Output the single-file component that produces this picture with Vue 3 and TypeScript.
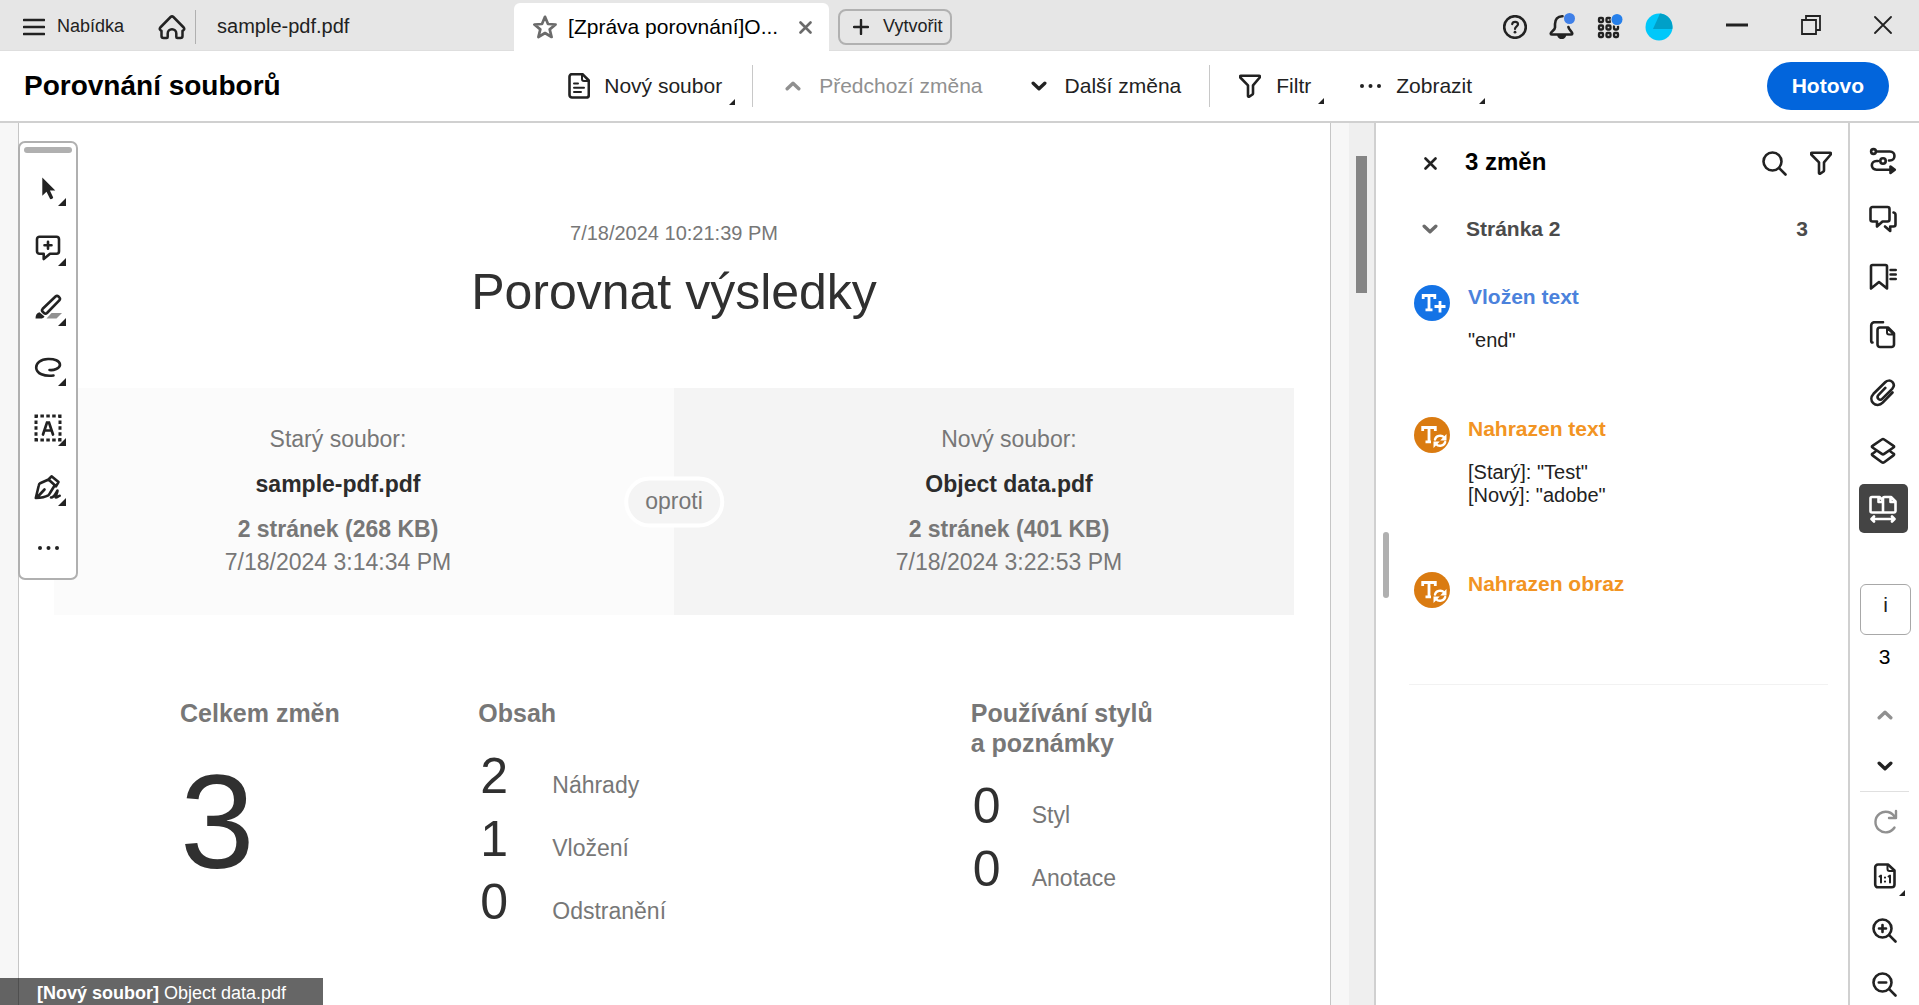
<script setup lang="ts">
import { ref } from 'vue'

interface Glyph { w: number; h: number; body: string }
interface Tool { icon: string; label: string; more?: boolean }
interface Change { kind: 'insert' | 'replace'; title: string; lines: string[] }
interface StatRow { count: number; label: string }

const dots = '<g fill="currentColor" stroke="none"><circle cx="2" cy="3" r="2"/><circle cx="10.500" cy="3" r="2"/><circle cx="19" cy="3" r="2"/></g>'

const icons: Record<string, Glyph> = {
  menu: { w: 22, h: 18, body: '<path d="M1 2h20M1 9h20M1 16h20"/>' },
  home: { w: 28, h: 26, body: '<path stroke-width="2.500" d="M2.300 13.500 12.600 3a2 2 0 0 1 2.800 0l10.300 10.500c1.200 1.500.2 3-1.200 3.200v5.300a2 2 0 0 1-2 2h-3.200a1 1 0 0 1-1-1v-3.500a4 4 0 0 0-8.600 0V23a1 1 0 0 1-1 1H5.500a2 2 0 0 1-2-2v-5.300c-1.400-.2-2.400-1.700-1.200-3.200z"/>' },
  star: { w: 24, h: 24, body: '<path stroke-width="2.700" d="m12 1.800 3 7.200 7.600.5-5.900 4.900 1.900 7.600L12 18l-6.600 4 1.900-7.600L1.400 9.500 9 9z"/>' },
  close: { w: 13, h: 13, body: '<path stroke-width="2.600" d="m1.500 1.500 10 10m0-10-10 10"/>' },
  plus: { w: 16, h: 16, body: '<path stroke-width="2.400" d="M8 1v14M1 8h14"/>' },
  help: { w: 24, h: 24, body: '<circle cx="12" cy="12" r="10.800"/><path stroke-width="2.200" d="M9.200 9.200c.3-3.200 5.800-3.200 5.800 0 0 2.200-3 2-3 4.800"/><circle cx="12" cy="17.200" r="1.400" fill="currentColor" stroke="none"/>' },
  bell: { w: 26, h: 28, body: '<path d="M13.500 3.200C8.500 3 6 6.300 6 11v3.500c0 2.600-4.300 4-4.300 6 0 .7.400 1 1 1h19.600c.6 0 1-.3 1-1 0-2-3.300-3.400-3.900-6.500"/><path fill="currentColor" d="M9.500 22.500a3.400 3.400 0 0 0 6.400 0z"/><circle cx="20.500" cy="5.500" r="5.500" fill="#4080e8" stroke="none"/>' },
  apps: { w: 26, h: 26, body: '<g stroke-width="2.300"><rect x="2" y="4" width="4" height="4" rx="1"/><rect x="9.500" y="4" width="4" height="4" rx="1"/><rect x="2" y="11.500" width="4" height="4" rx="1"/><rect x="9.500" y="11.500" width="4" height="4" rx="1"/><path d="M17 12.500v2a1 1 0 0 0 1 1h2a1 1 0 0 0 1-1v-2"/><rect x="2" y="19" width="4" height="4" rx="1"/><rect x="9.500" y="19" width="4" height="4" rx="1"/><rect x="17" y="19" width="4" height="4" rx="1"/></g><circle cx="20" cy="5.500" r="6.500" fill="#e6e6e6" stroke="none"/><circle cx="20" cy="5.500" r="5.500" fill="#2680eb" stroke="none"/>' },
  avatar: { w: 28, h: 28, body: '<g stroke="none"><circle cx="14" cy="14" r="13.500" fill="#00c8fa"/><path fill="#00a0c8" d="M15 .5 8 16h19.300A13.500 13.500 0 0 0 15 .5z"/></g>' },
  minimise: { w: 22, h: 4, body: '<path stroke-width="3" stroke-linecap="butt" d="M0 2h22"/>' },
  restore: { w: 20, h: 20, body: '<path stroke-width="1.800" stroke-linejoin="miter" d="M1 5h14v14H1zM5 5V1h14v14h-4"/>' },
  closeWindow: { w: 18, h: 18, body: '<path stroke-width="1.800" d="m1 1 16 16m0-16L1 17"/>' },
  doc: { w: 22, h: 26, body: '<path d="M4 1.200h10.500l6.300 6.300V22a2.500 2.500 0 0 1-2.500 2.500H4A2.500 2.500 0 0 1 1.500 22V3.700A2.500 2.500 0 0 1 4 1.200z"/><path stroke-width="2" d="M14 1.500V6a2 2 0 0 0 2 2h4.500M6 10.500h4M6 14.700h10M6 19h7"/>' },
  up: { w: 16, h: 10, body: '<path stroke-width="3.400" d="m2.200 7.800 5.800-5.500 5.800 5.500"/>' },
  down: { w: 16, h: 10, body: '<path stroke-width="3.400" d="m2.200 2.200 5.800 5.500 5.800-5.500"/>' },
  filter: { w: 22, h: 24, body: '<path d="M1.900 1.800h18.200c.9 0 1.200 1 .6 1.700L14 11.300v8.200c0 .5-.2.800-.6 1l-3.200 2.200c-.6.300-1.200 0-1.200-.7V11.300L1.300 3.500c-.6-.7-.3-1.700.6-1.700z"/>' },
  more: { w: 21, h: 6, body: dots },
  corner: { w: 8, h: 8, body: '<path fill="currentColor" stroke="none" d="M8 0v8H0z"/>' },
  select: { w: 28, h: 28, body: '<path fill="currentColor" stroke="none" d="M8.300 3.500v18.300l4.200-4 3.500 7c.5 1 3.600-.4 3.100-1.500l-3.200-6.800h5.400z"/>' },
  comment: { w: 28, h: 28, body: '<path d="M5.500 2.800h17a2.500 2.500 0 0 1 2.500 2.500v12a2.500 2.500 0 0 1-2.500 2.500H16L9.700 25v-5.200H5.500A2.500 2.500 0 0 1 3 17.300v-12a2.500 2.500 0 0 1 2.500-2.500zM14 7.800v7M10.500 11.300h7"/>' },
  highlight: { w: 28, h: 28, body: '<path fill="#929292" stroke="none" d="M17.500 19H28l-5.500 5.500H12.500z"/><path d="M21.500 2.500a2.200 2.200 0 0 1 3 0l.8.800a2.200 2.200 0 0 1 0 3L13 19a2.200 2.200 0 0 1-3 0l-1.300-1.200a2.200 2.200 0 0 1 0-3z"/><path fill="currentColor" stroke="none" d="M5.500 18.300 10.500 22.500c-.8 1.400-2 2-4 2H1.500c0-3.200 1.300-5.700 4-6.200z"/>' },
  lasso: { w: 28, h: 28, body: '<path d="M15.500 16c4.500.5 10-1.500 10.500-5 0-4.500-6-6.200-12-6-7.500.2-12 4.200-11.800 8.800.4 5.700 7.800 9 17.300 7.700"/>' },
  textbox: { w: 28, h: 28, body: '<g stroke-width="3" stroke-linecap="butt"><path stroke-dasharray="3.500 2.400" d="M.5 2h27M.5 26h27M2 .5v27M26 .5v27"/></g><path stroke-width="2.700" stroke-linejoin="miter" d="M9 20.500 13 8.500h2l4 12M10.500 16.500h7"/>' },
  sign: { w: 28, h: 28, body: '<path d="m14.500 5.500-8.300 3.700c-1 .5-1.300 1.500-1.500 2.600L1.800 24c3.700-.2 8.800-.7 12.400-2.700 1-.6 1.300-1.200 1.800-2.300l4.600-7.500M14.500 5.500l3-3.200 7 5.800-2.500 4.200zM3 23.500l7.500-8M17 23.500c3 .3 5-4.500 6.500-7 .5 1.500-3 7-1.500 7s2-1.500 3.700-1.800"/>' },
  workflow: { w: 28, h: 28, body: '<circle cx="4.500" cy="4.500" r="2.400"/><circle cx="14" cy="14" r="2.700"/><path d="M7.500 4.500h13.300c6.200 0 6.200 9 0 9h-.8M9 14H7.500c-6.200 0-6.200 8.700 0 8.700h15"/><path fill="currentColor" d="M21.500 19.500v6.400l4.300-3.200z"/>' },
  comments: { w: 28, h: 28, body: '<path d="M3.500 2h15a2 2 0 0 1 2 2v10.500a2 2 0 0 1-2 2h-5L8 21.500v-5H3.500a2 2 0 0 1-2-2V4a2 2 0 0 1 2-2zM24.500 7.500c1.300.3 2 1 2 2.300v9.700a2 2 0 0 1-2 2h-3.300V26l-5.200-4.500"/>' },
  bookmark: { w: 28, h: 28, body: '<path d="M3.500 2h13a1.500 1.500 0 0 1 1.500 1.500v22L10 19l-8 6.500v-22A1.500 1.500 0 0 1 3.500 2z"/><path stroke-width="2.400" d="M21.500 7h5.300M21.500 11.500h5.300M21.500 16h5.300"/>' },
  pages: { w: 28, h: 28, body: '<path d="M3.500 21.500c-1 0-1.300-.8-1.300-1.800V4.500A3.300 3.300 0 0 1 5.500 1.200H14M11 6.500h8l6 6V23.500a2.500 2.500 0 0 1-2.500 2.500H11a2.500 2.500 0 0 1-2.500-2.500V9A2.500 2.500 0 0 1 11 6.500z"/><path stroke-width="2" d="M18 7v4.500a2 2 0 0 0 2 2h5z"/>' },
  attach: { w: 28, h: 28, body: '<path stroke-width="2.600" d="m23.500 13.500-9.800 10.200c-2.900 2.900-7 2.900-9.500.4-2.500-2.600-2.400-6.400.3-9.300L16.200 3.300c2-2 5.100-2.200 7.100-.4 1.900 2 1.800 4.800-.1 6.900L13.400 19.700c-1.200 1.200-2.900 1.200-4 .2-1.100-1.200-1-2.800.2-4l6.700-7"/>' },
  layers: { w: 28, h: 28, body: '<path d="M12.800 2.500a2 2 0 0 1 2.400 0l9.300 6.300c.8.500.8 1.200 0 1.700l-9.300 6.400a2 2 0 0 1-2.400 0L3.500 10.500c-.8-.5-.8-1.200 0-1.700zM6.500 14.500l-3 2.200c-.8.500-.8 1.200 0 1.700l9.300 6.800a2 2 0 0 0 2.400 0l9.300-6.800c.8-.5.8-1.200 0-1.700l-3-2.200"/>' },
  compare: { w: 28, h: 28, body: '<path d="M3 2h7.500l3.500 3.500v12H3A1.500 1.500 0 0 1 1.500 16V3.500A1.500 1.500 0 0 1 3 2zM14 17.500V3.500A1.500 1.500 0 0 1 15.500 2H22l4.500 4.500V16a1.500 1.500 0 0 1-1.500 1.500zM9.500 2.500V7h4M21.500 2.500V7H26"/><path stroke-width="2.600" d="M4 24h20M5 21.500 2.500 24 5 26.500M23 21.500l2.500 2.500-2.500 2.500"/>' },
  search: { w: 25, h: 25, body: '<circle cx="10.500" cy="10.500" r="9"/><path stroke-width="2.600" d="m17.200 17.200 6.300 6.300"/>' },
  rotate: { w: 26, h: 26, body: '<path stroke-width="2.400" d="M23 8.500A10.300 10.300 0 1 0 22.500 18.500M24 2v7h-7"/>' },
  actual: { w: 24, h: 28, body: '<path stroke-width="2.600" d="M5 2.500h10l6.500 6V22.500A2.800 2.800 0 0 1 18.700 25.300H5A2.800 2.800 0 0 1 2.200 22.500V5.300A2.800 2.800 0 0 1 5 2.500z"/><path stroke-width="2" d="M14.500 3v4a2 2 0 0 0 2 2h4.500M6.500 14.500l1.500-1v7M15.500 14.500l1.500-1v7"/><path stroke-width="2.200" d="M12 15.500v.1M12 19.500v.1"/>' },
  zoomIn: { w: 25, h: 25, body: '<circle cx="10.500" cy="10.500" r="9"/><path stroke-width="2.600" d="m17.200 17.200 6.300 6.300M10.500 7v7M7 10.500h7"/>' },
  zoomOut: { w: 25, h: 25, body: '<circle cx="10.500" cy="10.500" r="9"/><path stroke-width="2.600" d="m17.200 17.200 6.300 6.300M6.800 10.500h7.400"/>' },
  insert: { w: 36, h: 36, body: '<g stroke-linejoin="miter" stroke-linecap="butt" stroke-width="2.800"><path d="M9.200 14v-3.500h11.600V14M15 10.500v14.300M11.500 24.800h7"/><path d="M20.500 21.500h11M26 16v11.500"/></g>' },
  replace: { w: 36, h: 36, body: '<g stroke-linejoin="miter" stroke-linecap="butt" stroke-width="2.800"><path d="M8.700 14v-3.500h12.600V14M15 10.500v14.300M11.500 24.800H17"/></g><path stroke-width="2.400" d="M21 22.500c.8-4 6.500-5 9-2.200M31.200 25c-1 4-6.500 5-9 2.200"/><path fill="currentColor" stroke="none" d="M32.500 17v6.500h-6.300zM19.500 31v-6.500h6.300z"/>' },
}

const tools: Tool[] = [
  { icon: 'select', label: 'Vybrat', more: true },
  { icon: 'comment', label: 'Komentář', more: true },
  { icon: 'highlight', label: 'Zvýraznit', more: true },
  { icon: 'lasso', label: 'Kreslit', more: true },
  { icon: 'textbox', label: 'Textové pole', more: true },
  { icon: 'sign', label: 'Podpis', more: true },
  { icon: 'more', label: 'Více' },
]

const rail: Tool[] = [
  { icon: 'workflow', label: 'Postup' },
  { icon: 'comments', label: 'Komentáře' },
  { icon: 'bookmark', label: 'Záložky' },
  { icon: 'pages', label: 'Stránky' },
  { icon: 'attach', label: 'Přílohy' },
  { icon: 'layers', label: 'Vrstvy' },
  { icon: 'compare', label: 'Porovnání' },
]

const changes: Change[] = [
  { kind: 'insert', title: 'Vložen text', lines: ['"end"'] },
  { kind: 'replace', title: 'Nahrazen text', lines: ['[Starý]: "Test"', '[Nový]: "adobe"'] },
  { kind: 'replace', title: 'Nahrazen obraz', lines: [] },
]

const files = [
  { heading: 'Starý soubor:', name: 'sample-pdf.pdf', size: '2 stránek (268 KB)', date: '7/18/2024 3:14:34 PM' },
  { heading: 'Nový soubor:', name: 'Object data.pdf', size: '2 stránek (401 KB)', date: '7/18/2024 3:22:53 PM' },
]

const content: StatRow[] = [
  { count: 2, label: 'Náhrady' },
  { count: 1, label: 'Vložení' },
  { count: 0, label: 'Odstranění' },
]
const styling: StatRow[] = [
  { count: 0, label: 'Styl' },
  { count: 0, label: 'Anotace' },
]

const page = ref('i')
const activePanel = ref('compare')

const box = (name: string) => ({
  viewBox: `0 0 ${icons[name].w} ${icons[name].h}`,
  width: icons[name].w,
  height: icons[name].h,
  innerHTML: icons[name].body,
  'aria-hidden': true,
})
</script>

<template>
  <div class="app">
    <header class="tabs">
      <button class="menu" type="button"><svg class="icon" v-bind="box('menu')" />Nabídka</button>
      <button class="home" type="button" aria-label="Domů"><svg class="icon" v-bind="box('home')" /></button>
      <button class="tab" type="button">sample-pdf.pdf</button>
      <div class="tab active">
        <button class="star" type="button" aria-label="Hvězdička"><svg class="icon" v-bind="box('star')" /></button>
        <span class="tab-title">[Zpráva porovnání]O...</span>
        <button class="tab-close" type="button" aria-label="Zavřít kartu"><svg class="icon" v-bind="box('close')" /></button>
      </div>
      <button class="create" type="button"><svg class="icon" v-bind="box('plus')" />Vytvořit</button>
      <div class="account">
        <button type="button" aria-label="Nápověda"><svg class="icon" v-bind="box('help')" /></button>
        <button type="button" aria-label="Oznámení"><svg class="icon" v-bind="box('bell')" /></button>
        <button type="button" aria-label="Aplikace"><svg class="icon" v-bind="box('apps')" /></button>
        <button type="button" aria-label="Účet"><svg class="icon" v-bind="box('avatar')" /></button>
      </div>
      <div class="window">
        <button type="button" aria-label="Minimalizovat"><svg class="icon" v-bind="box('minimise')" /></button>
        <button type="button" aria-label="Obnovit"><svg class="icon" v-bind="box('restore')" /></button>
        <button type="button" aria-label="Zavřít"><svg class="icon" v-bind="box('closeWindow')" /></button>
      </div>
    </header>

    <div class="toolbar">
      <h1>Porovnání souborů</h1>
      <div class="actions">
        <button class="action new-file" type="button">
          <svg class="icon" v-bind="box('doc')" />Nový soubor<svg class="icon corner" v-bind="box('corner')" />
        </button>
        <span class="rule"></span>
        <button class="action previous" type="button" disabled><svg class="icon" v-bind="box('up')" />Předchozí změna</button>
        <button class="action next" type="button"><svg class="icon" v-bind="box('down')" />Další změna</button>
        <span class="rule"></span>
        <button class="action filter" type="button">
          <svg class="icon" v-bind="box('filter')" />Filtr<svg class="icon corner" v-bind="box('corner')" />
        </button>
        <button class="action view" type="button">
          <svg class="icon" v-bind="box('more')" />Zobrazit<svg class="icon corner" v-bind="box('corner')" />
        </button>
      </div>
      <button class="done" type="button">Hotovo</button>
    </div>

    <div class="body">
      <main class="viewer">
        <article class="sheet">
          <p class="stamp">7/18/2024 10:21:39 PM</p>
          <h2>Porovnat výsledky</h2>
          <section class="files">
            <div v-for="file in files" :key="file.name" class="file">
              <p>{{ file.heading }}</p>
              <p class="file-name">{{ file.name }}</p>
              <div>
                <p class="file-size">{{ file.size }}</p>
                <p>{{ file.date }}</p>
              </div>
            </div>
            <span class="versus">oproti</span>
          </section>
          <section class="stats">
            <div>
              <h3>Celkem změn</h3>
              <p class="total">3</p>
            </div>
            <div>
              <h3>Obsah</h3>
              <dl class="counts">
                <div v-for="row in content" :key="row.label">
                  <dd>{{ row.count }}</dd><dt>{{ row.label }}</dt>
                </div>
              </dl>
            </div>
            <div>
              <h3>Používání stylů<br />a poznámky</h3>
              <dl class="counts narrow">
                <div v-for="row in styling" :key="row.label">
                  <dd>{{ row.count }}</dd><dt>{{ row.label }}</dt>
                </div>
              </dl>
            </div>
          </section>
        </article>
        <nav class="palette" aria-label="Nástroje">
          <span class="grip"></span>
          <button v-for="tool in tools" :key="tool.icon" type="button" :aria-label="tool.label">
            <svg class="icon" v-bind="box(tool.icon)" />
            <svg v-if="tool.more" class="icon corner" v-bind="box('corner')" />
          </button>
        </nav>
        <p class="status"><b>[Nový soubor]</b> Object data.pdf</p>
      </main>
      <div class="scrollbar"><span class="thumb"></span></div>

      <aside class="panel">
        <span class="resizer"></span>
        <header class="panel-head">
          <button type="button" aria-label="Zavřít panel"><svg class="icon" v-bind="box('close')" /></button>
          <h2>3 změn</h2>
          <button type="button" aria-label="Hledat"><svg class="icon" v-bind="box('search')" /></button>
          <button type="button" aria-label="Filtr"><svg class="icon" v-bind="box('filter')" /></button>
        </header>
        <button class="group" type="button">
          <svg class="icon" v-bind="box('down')" /><span class="group-name">Stránka 2</span><span class="group-count">3</span>
        </button>
        <ul class="changes">
          <li v-for="change in changes" :key="change.title" :class="change.kind">
            <span class="badge"><svg class="icon" v-bind="box(change.kind)" /></span>
            <div>
              <h3>{{ change.title }}</h3>
              <p v-for="line in change.lines" :key="line">{{ line }}</p>
            </div>
          </li>
        </ul>
      </aside>

      <nav class="rail" aria-label="Panely">
        <button
          v-for="item in rail"
          :key="item.icon"
          type="button"
          class="rail-item"
          :class="{ selected: activePanel === item.icon }"
          :aria-label="item.label"
          @click="activePanel = item.icon"
        >
          <svg class="icon" v-bind="box(item.icon)" />
        </button>
        <input v-model="page" class="page" aria-label="Stránka" />
        <span class="page-total">3</span>
        <button class="step" type="button" disabled aria-label="Předchozí stránka"><svg class="icon" v-bind="box('up')" /></button>
        <button class="step" type="button" aria-label="Další stránka"><svg class="icon" v-bind="box('down')" /></button>
        <hr />
        <button class="view-tool" type="button" disabled aria-label="Otočit"><svg class="icon" v-bind="box('rotate')" /></button>
        <button class="view-tool" type="button" aria-label="Skutečná velikost">
          <svg class="icon" v-bind="box('actual')" /><svg class="icon corner" v-bind="box('corner')" />
        </button>
        <button class="view-tool" type="button" aria-label="Zvětšit"><svg class="icon" v-bind="box('zoomIn')" /></button>
        <button class="view-tool" type="button" aria-label="Zmenšit"><svg class="icon" v-bind="box('zoomOut')" /></button>
      </nav>
    </div>
  </div>
</template>

<style>
body {
  margin: 0;
}
</style>

<style scoped>
* {
  box-sizing: border-box;
}

.app {
  display: flex;
  flex-direction: column;
  height: 100vh;
  overflow: hidden;
  background: #fff;
  color: #222;
  font-family: "Liberation Sans", Arial, sans-serif;
  font-size: 21px;
}

h1, h2, h3, p, ul, dl, dd {
  margin: 0;
  padding: 0;
}

button {
  position: relative;
  display: flex;
  align-items: center;
  padding: 0;
  border: 0;
  background: none;
  color: inherit;
  font: inherit;
  white-space: nowrap;
}

.icon {
  flex: none;
  fill: none;
  stroke: currentColor;
  stroke-width: 2.6;
  stroke-linecap: round;
  stroke-linejoin: round;
}

/* Tab strip */
.tabs {
  display: flex;
  align-items: center;
  height: 51px;
  flex: none;
  padding-top: 3px;
  border-bottom: 1px solid #dedede;
  background: #e6e6e6;
}

.menu {
  gap: 12px;
  padding-left: 23px;
  font-size: 18px;
}

.home {
  height: 34px;
  margin-left: 34px;
  padding-right: 9px;
  border-right: 1px solid #b0b0b0;
}

.tab {
  flex: 0 1 318px;
  padding-left: 21px;
  font-size: 20px;
}

.tab.active {
  display: flex;
  align-items: center;
  align-self: stretch;
  flex-basis: 315px;
  margin-bottom: -1px;
  padding: 0 17px 0 19px;
  border-radius: 6px 6px 0 0;
  background: #fff;
  color: #000;
  font-size: 21px;
}

.star,
.tab-close {
  color: #6b6b6b;
}

.tab-title {
  margin: 0 auto 0 11px;
  white-space: nowrap;
}

.create {
  gap: 14px;
  height: 36px;
  margin-left: 9px;
  padding: 0 8px 0 13px;
  border: 2px solid #b1b1b1;
  border-radius: 8px;
  font-size: 18px;
}

.account {
  display: flex;
  align-items: center;
  gap: 22px;
  margin-left: auto;
}

.window {
  display: flex;
  align-items: center;
  gap: 53px;
  padding: 0 27px 4px 53px;
}

/* Comparison toolbar */
.toolbar {
  display: flex;
  align-items: center;
  justify-content: space-between;
  height: 72px;
  flex: none;
  padding: 0 30px 0 24px;
  border-bottom: 2px solid #d0d0d0;
}

h1 {
  margin-right: 6px;
  color: #000;
  font-size: 28px;
  line-height: 36px;
}

.actions {
  display: flex;
  align-items: center;
}

.action {
  gap: 18px;
}

.action:disabled {
  color: #909090;
}

.new-file,
.filter,
.view {
  padding-right: 13px;
}

.new-file {
  gap: 14px;
}

.filter,
.view {
  gap: 15px;
}

.rule {
  width: 1px;
  height: 42px;
  margin: 0 29px 0 17px;
  background: #c8c8c8;
}

.previous {
  margin-left: 3px;
}

.next {
  margin: 0 11px 0 48px;
}

.view {
  margin-left: 36px;
}

.corner {
  position: absolute;
  right: 0;
  bottom: -6px;
  width: 6px;
  height: 6px;
}

.done {
  justify-content: center;
  height: 48px;
  padding: 0 25px;
  border-radius: 24px;
  background: #0265dc;
  color: #fff;
  font-weight: bold;
}

/* Document */
.body {
  display: flex;
  flex: 1;
  min-height: 0;
}

.viewer {
  position: relative;
  flex: 1;
  min-width: 0;
  overflow: hidden;
  padding: 0 18px;
  background: #f7f7f7;
}

.sheet {
  min-height: 100%;
  padding: 98px 36px 0 35px;
  border: solid #c6c6c6;
  border-width: 0 1px;
  background: #fff;
  color: #777;
  text-align: center;
}

.stamp {
  font-size: 20px;
  line-height: 24px;
}

.sheet h2 {
  margin: 17px 0 66px;
  color: #303030;
  font-size: 50px;
  font-weight: normal;
  line-height: 60px;
}

.files {
  position: relative;
  display: grid;
  grid-template-columns: 1fr 1fr;
  font-size: 23px;
  line-height: 33px;
}

.file {
  display: flex;
  flex-direction: column;
  gap: 12px;
  padding: 35px 52px 36px 0;
  background: #fbfbfb;
}

.file + .file {
  padding-right: 0;
  padding-left: 50px;
  background: #f4f4f4;
}

.file-name {
  color: #2c2c2c;
  font-weight: bold;
}

.file-size {
  font-weight: bold;
}

.versus {
  position: absolute;
  top: 50%;
  left: 50%;
  padding: 4px 17px 6px;
  border: 4px solid #fff;
  border-radius: 26px;
  background: #f4f4f4;
  transform: translate(-50%, -50%);
}

.stats {
  display: grid;
  grid-template-columns: 298fr 492fr 323fr;
  margin-top: 83px;
  padding-left: 126px;
  text-align: left;
}

.stats h3 {
  font-size: 25px;
  line-height: 30px;
}

.total {
  margin-top: 27px;
  color: #303030;
  font-size: 134px;
  line-height: 134px;
}

.counts {
  margin: 17px 0 0 2px;
}

.counts > div {
  display: grid;
  grid-template-columns: 72px 1fr;
  align-items: baseline;
}

.counts.narrow > div {
  grid-template-columns: 59px 1fr;
}

.counts dd {
  color: #303030;
  font-size: 50px;
  line-height: 63px;
}

.counts dt {
  font-size: 23px;
  line-height: 30px;
}

.palette {
  position: absolute;
  top: 18px;
  left: 18px;
  display: flex;
  flex-direction: column;
  width: 60px;
  border: 2px solid #b0b0b0;
  border-radius: 7px;
  background: #fff;
}

.palette button {
  justify-content: center;
  height: 60px;
}

.palette .corner {
  right: 10px;
  bottom: 12px;
  width: 8px;
  height: 8px;
}

.grip {
  height: 6px;
  margin: 4px 4px 5px;
  border-radius: 3px;
  background: #b0b0b0;
}

.status {
  position: absolute;
  bottom: 0;
  left: 0;
  padding: 3px 37px 0;
  background: rgba(0, 0, 0, 0.6);
  color: #fff;
  font-size: 18px;
  line-height: 24px;
}

.scrollbar {
  width: 25px;
  padding: 33px 7px;
  background: #efefef;
}

.thumb {
  display: block;
  height: 137px;
  background: #858585;
}

/* Changes panel */
.panel {
  position: relative;
  width: 476px;
  flex: none;
  border: solid #d0d0d0;
  border-width: 0 2px;
}

.resizer {
  position: absolute;
  top: 409px;
  left: 7px;
  width: 6px;
  height: 66px;
  border-radius: 3px;
  background: #b0b0b0;
}

.panel-head {
  display: flex;
  align-items: center;
  gap: 23px;
  padding: 24px 16px 0 48px;
}

.panel-head h2 {
  margin: 0 auto 0 5px;
  padding-bottom: 2px;
  color: #000;
  font-size: 24px;
  line-height: 30px;
}

.group {
  width: 100%;
  padding: 34px 40px 0 46px;
  color: #4b4b4b;
  font-weight: bold;
  line-height: 32px;
}

.group .icon {
  color: #6b6b6b;
}

.group-name {
  margin-left: 28px;
}

.group-count {
  margin-left: auto;
}

.changes {
  margin: 38px 20px 0 33px;
  border-bottom: 1px solid #f2f2f2;
  list-style: none;
}

.changes li {
  display: flex;
  align-items: flex-start;
  gap: 18px;
  min-height: 114px;
  padding: 0 0 63px 5px;
  color: #222;
  font-size: 20px;
  line-height: 23px;
}

.changes h3 {
  margin-bottom: 18px;
  color: #f29423;
  font-size: 21px;
  line-height: 28px;
}

.changes .insert h3 {
  color: #4b82dc;
}

.badge {
  display: flex;
  margin-top: 2px;
  border-radius: 50%;
  background: #da7b11;
  color: #fff;
}

.insert .badge {
  background: #1473e6;
}

/* Right rail */
.rail {
  display: flex;
  flex-direction: column;
  align-items: center;
  width: 69px;
  flex: none;
  padding-top: 13px;
}

.rail-item {
  justify-content: center;
  width: 49px;
  height: 49px;
  flex: none;
  margin: 0 3px 9px 0;
  border-radius: 5px;
}

.rail-item.selected {
  background: #444;
  color: #fff;
}

.page {
  width: 51px;
  height: 51px;
  flex: none;
  margin: 42px 0 8px 2px;
  padding: 0 0 10px;
  border: 1px solid #a8a8a8;
  border-radius: 6px;
  background: #fff;
  color: #222;
  font: inherit;
  text-align: center;
}

.page-total {
  margin-bottom: 18px;
  color: #000;
  line-height: 28px;
}

.step {
  height: 51px;
  flex: none;
}

.step:disabled,
.view-tool:disabled {
  color: #909090;
}

.rail hr {
  width: 49px;
  flex: none;
  margin: 0 0 3px;
  border: 0;
  border-top: 1px solid #e0e0e0;
}

.view-tool {
  justify-content: center;
  width: 40px;
  height: 54px;
  flex: none;
}

.view-tool .corner {
  bottom: 7px;
}
</style>
